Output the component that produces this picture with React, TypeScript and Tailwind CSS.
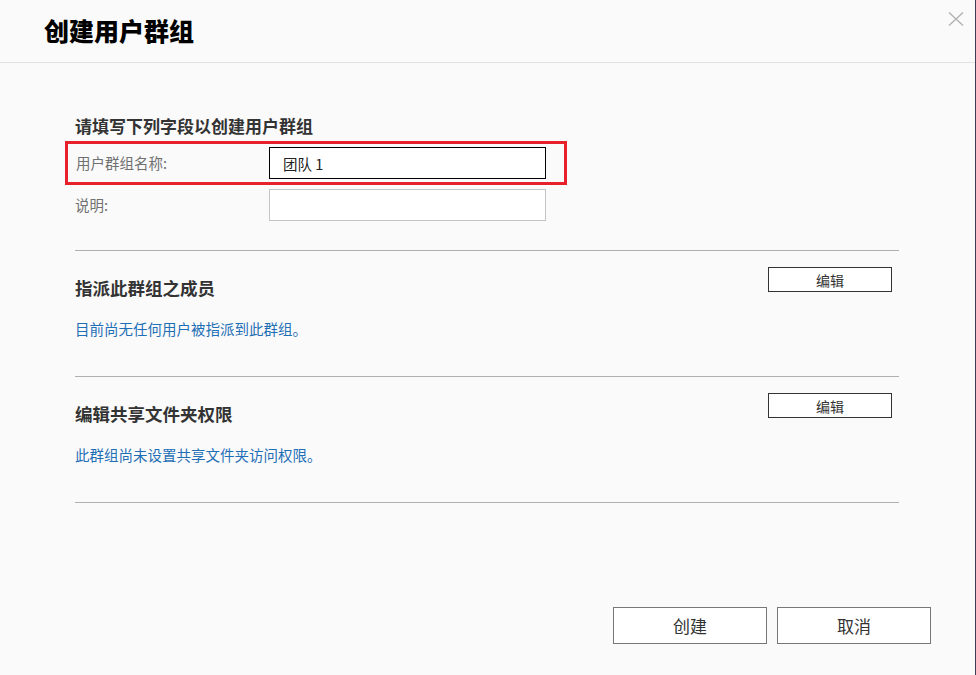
import React, { useState } from 'react';

const FONT = { fontFamily: '"Noto Sans CJK SC", "Noto Sans", "Liberation Sans", sans-serif' };

interface SectionProps {
  title: string;
  note: string;
}

const Section: React.FC<SectionProps> = ({ title, note }) => (
  <div className="border-t border-[#b0b0b0] h-[126px]">
    <div className="flex items-start justify-between">
      <h2 className="pt-[26px] text-[17.5px] leading-[22px] font-bold text-[#333]">{title}</h2>
      <button className="mt-[16px] mr-[7px] w-[124px] h-[25px] border-[1.5px] border-[#333] bg-white text-[14px] leading-[20px] text-[#333]">
        编辑
      </button>
    </div>
    <p className="mt-[20px] text-[14.5px] leading-[20px] text-[#1f6fb6]">{note}</p>
  </div>
);

export default function App() {
  const [name, setName] = useState('团队 1');
  const [desc, setDesc] = useState('');

  return (
    <div style={FONT} className="w-[976px] h-[675px] bg-[#fafafa] border-r border-[#3d3d55] flex flex-col">
      <header className="h-[63px] shrink-0 border-b border-[#e2e2e2] flex items-center justify-between pl-[44px] pr-[11px]">
        <h1 className="text-[25px] leading-[30px] font-black text-black pb-[3px]">创建用户群组</h1>
        <button className="self-start mt-[11px] w-[17px] h-[15px] flex items-center justify-center">
          <svg width="16" height="14" viewBox="0 0 16 14">
            <path d="M1 0.5 L15 13.5 M15 0.5 L1 13.5" stroke="#b3b3b3" strokeWidth="1.4" fill="none" />
          </svg>
        </button>
      </header>

      <main className="flex-1 pl-[75px] pr-[76px]">
        <div className="pt-[52px] pb-[29px]">
          <h2 className="text-[17px] leading-[22px] font-bold text-[#333]">请填写下列字段以创建用户群组</h2>
          <div className="mt-[4px] -ml-[10px] w-[502px] h-[44px] border-[3px] border-[#e8202b] flex items-center pl-[8px]">
            <label className="w-[193px] text-[14.5px] leading-[20px] text-[#707070]">用户群组名称:</label>
            <input
              autoFocus
              value={name}
              onChange={e => setName(e.target.value)}
              className="w-[277px] h-[32px] border border-black bg-white px-[13px] text-[14.5px] text-[#222] outline-none caret-black"
            />
          </div>
          <div className="mt-[4px] flex items-center">
            <label className="w-[194px] text-[14.5px] leading-[20px] text-[#707070]">说明:</label>
            <input
              value={desc}
              onChange={e => setDesc(e.target.value)}
              className="w-[277px] h-[32px] border border-[#c4c4c4] bg-white px-[13px] text-[14.5px] outline-none"
            />
          </div>
        </div>

        <Section title="指派此群组之成员" note="目前尚无任何用户被指派到此群组。" />
        <Section title="编辑共享文件夹权限" note="此群组尚未设置共享文件夹访问权限。" />
        <div className="border-t border-[#b0b0b0]" />
      </main>

      <footer className="h-[68px] shrink-0 flex items-start justify-end gap-[10px] pr-[44px]">
        <button className="w-[154px] h-[37px] border border-[#777] bg-white text-[17px] text-[#333]">创建</button>
        <button className="w-[154px] h-[37px] border border-[#777] bg-white text-[17px] text-[#333]">取消</button>
      </footer>
    </div>
  );
}
